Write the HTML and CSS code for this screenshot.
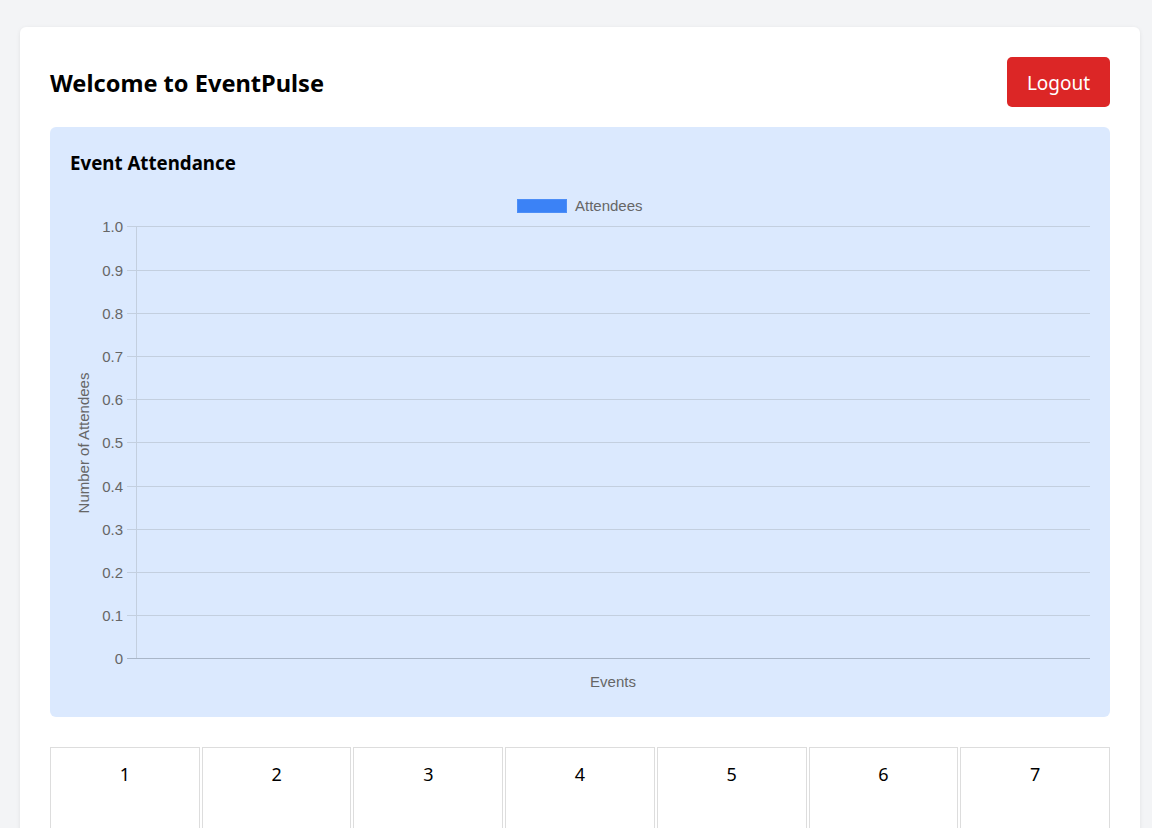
FILE: index.html
```html
<!DOCTYPE html>
<html lang="en">
<head>
<meta charset="utf-8">
<title>EventPulse</title>
<link rel="stylesheet" href="styles.css">
</head>
<body>
<div class="card">
  <header class="header">
    <h1 class="title">Welcome to EventPulse</h1>
    <button class="logout">Logout</button>
  </header>
  <section class="chart-box">
    <h2 class="chart-title">Event Attendance</h2>
    <svg class="chart" width="1020" height="508" viewBox="0 0 1020 508">
      <g class="legend">
        <rect x="447.5" y="10.5" width="49" height="13" fill="#3b82f6" stroke="#4d8ef7" stroke-width="1"/>
        <text x="505" y="21.5" class="lbl">Attendees</text>
      </g>
      <g class="grid" stroke="#c3cfdf" stroke-width="1">
        <line x1="57" y1="37.5" x2="1020" y2="37.5"/>
        <line x1="57" y1="81.5" x2="1020" y2="81.5"/>
        <line x1="57" y1="124.5" x2="1020" y2="124.5"/>
        <line x1="57" y1="167.5" x2="1020" y2="167.5"/>
        <line x1="57" y1="210.5" x2="1020" y2="210.5"/>
        <line x1="57" y1="253.5" x2="1020" y2="253.5"/>
        <line x1="57" y1="297.5" x2="1020" y2="297.5"/>
        <line x1="57" y1="340.5" x2="1020" y2="340.5"/>
        <line x1="57" y1="383.5" x2="1020" y2="383.5"/>
        <line x1="57" y1="426.5" x2="1020" y2="426.5"/>
        <line x1="66.5" y1="37" x2="66.5" y2="470"/>
      </g>
      <line x1="57" y1="469.5" x2="1020" y2="469.5" stroke="#a9b6c8" stroke-width="1"/>
      <g class="ticks lbl" text-anchor="end">
        <text x="53" y="42.5">1.0</text>
        <text x="53" y="86.5">0.9</text>
        <text x="53" y="129.5">0.8</text>
        <text x="53" y="172.5">0.7</text>
        <text x="53" y="215.5">0.6</text>
        <text x="53" y="258.5">0.5</text>
        <text x="53" y="302.5">0.4</text>
        <text x="53" y="345.5">0.3</text>
        <text x="53" y="388.5">0.2</text>
        <text x="53" y="431.5">0.1</text>
        <text x="53" y="474.5">0</text>
      </g>
      <text class="lbl" x="543" y="498" text-anchor="middle">Events</text>
      <text class="lbl" transform="translate(18.5 254) rotate(-90)" text-anchor="middle">Number of Attendees</text>
    </svg>
  </section>
  <div class="calendar">
    <div class="day">1</div>
    <div class="day">2</div>
    <div class="day">3</div>
    <div class="day">4</div>
    <div class="day">5</div>
    <div class="day">6</div>
    <div class="day">7</div>
  </div>
</div>
</body>
</html>
```

FILE: styles.css
```css
html, body {
  margin: 0;
  padding: 0;
}
body {
  background: #f3f4f6;
  font-family: "Noto Sans", "Open Sans", sans-serif;
  color: #000;
  padding: 27px 12px 20px 20px;
}
.card {
  background: #fff;
  border-radius: 6px;
  box-shadow: 0 1px 4px rgba(0, 0, 0, 0.08);
  padding: 30px;
}
.header {
  display: flex;
  justify-content: space-between;
  align-items: center;
  height: 50px;
  margin-bottom: 20px;
}
.title {
  margin: 0;
  font-size: 23.6px;
  font-weight: 700;
  position: relative;
  top: 1px;
}
.logout {
  background: #dc2626;
  color: #fff;
  border: none;
  border-radius: 5px;
  font-family: inherit;
  font-size: 19px;
  height: 50px;
  width: 103px;
  padding: 2px 0 0 0;
}
.chart-box {
  background: #dbe9fe;
  border-radius: 6px;
  padding: 20px;
}
.chart-title {
  margin: 0 0 10px 0;
  font-size: 18.7px;
  font-weight: 700;
  line-height: 32px;
}
.chart {
  display: block;
}
.lbl {
  font-family: "Liberation Sans", Arial, sans-serif;
  font-size: 15px;
  fill: #666;
}
.calendar {
  margin-top: 30px;
  display: grid;
  grid-template-columns: repeat(7, 1fr);
  gap: 2px;
}
.day {
  border: 1px solid #ddd;
  height: 100px;
  text-align: center;
  font-size: 18px;
  padding-top: 14px;
  box-sizing: border-box;
}
```
